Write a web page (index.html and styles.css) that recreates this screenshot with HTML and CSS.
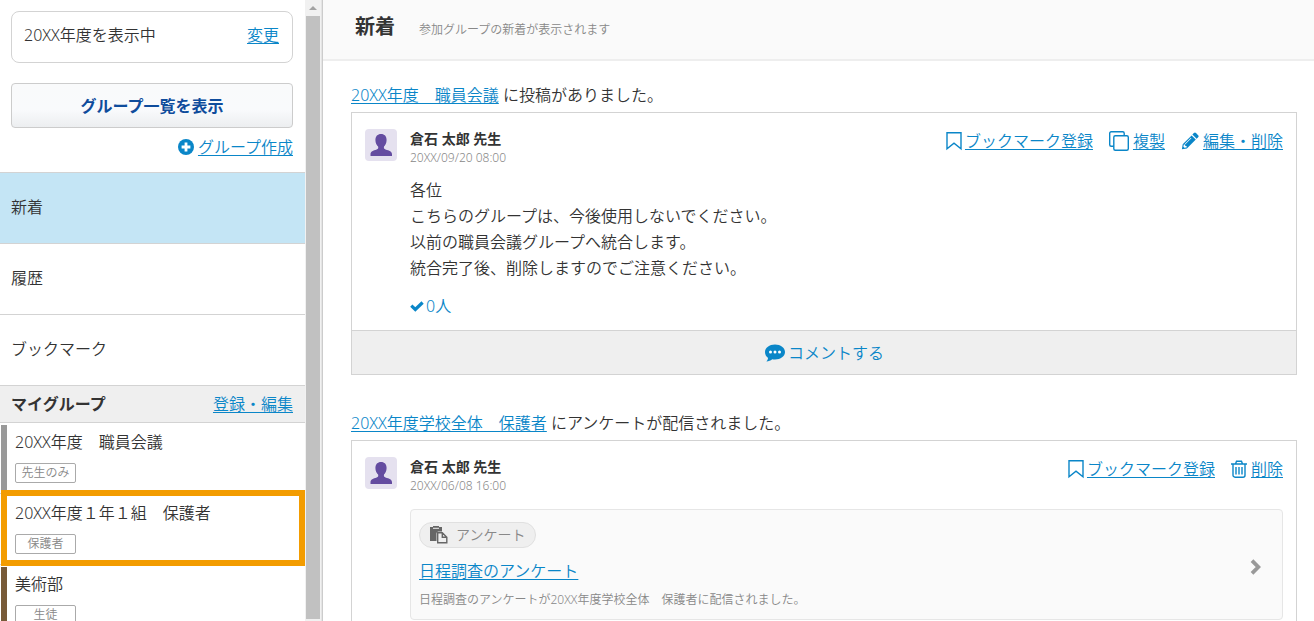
FILE: index.html
```html
<!DOCTYPE html>
<html lang="ja">
<head>
<meta charset="utf-8">
<meta name="viewport" content="width=device-width, initial-scale=1">
<title>新着</title>
<link rel="stylesheet" href="styles.css">
</head>
<body>
<svg class="sprite" aria-hidden="true">
  <symbol id="bookmark" viewBox="0 0 16 20"><path d="M1 1.700h14v16L8 12.200l-7 5.500z" fill="none" stroke="currentColor" stroke-width="1.400"/></symbol>
  <symbol id="person" viewBox="0 0 32 32"><path d="M16 5c3.6 0 5.6 2.300 5.600 6 0 3.200-1.400 5.300-2.600 6.600-.4 1.700.2 2.400 1.500 2.900 3.800 1.300 6.500 1.700 6.500 4.700V27H5.500v-1.800c0-3 2.700-3.400 6.200-4.700 1.300-.5 1.900-1.200 1.400-2.900-1.300-1.300-2.700-3.400-2.700-6.600 0-3.700 2.200-6 5.600-6z" fill="currentColor"/></symbol>
</svg>
<div class="app">
  <aside class="sidebar">
    <div class="sidebar-body">
      <div class="tools">
        <div class="year"><span>20XX年度を表示中</span><a href="#">変更</a></div>
        <button class="list-button" type="button">グループ一覧を表示</button>
        <div class="create">
          <svg width="16" height="16" viewBox="0 0 16 16" aria-hidden="true"><circle cx="8" cy="8" r="8" fill="currentColor"/><path d="M8 3.600v8.800M3.600 8h8.800" stroke="#fff" stroke-width="2.800"/></svg>
          <a href="#">グループ作成</a>
        </div>
      </div>
      <nav class="nav">
        <a class="nav-item current" href="#">新着</a>
        <a class="nav-item" href="#">履歴</a>
        <a class="nav-item" href="#">ブックマーク</a>
      </nav>
      <div class="group-head"><h2>マイグループ</h2><a href="#">登録・編集</a></div>
      <ul class="groups">
        <li class="group gray"><span>20XX年度　職員会議</span><span class="badge">先生のみ</span></li>
        <li class="group marked"><span>20XX年度１年１組　保護者</span><span class="badge">保護者</span></li>
        <li class="group brown"><span>美術部</span><span class="badge">生徒</span></li>
      </ul>
    </div>
    <div class="scrollbar" aria-hidden="true"><span class="arrow"></span><span class="thumb"></span></div>
  </aside>
  <main class="main">
    <header class="page-head"><h1>新着</h1><p>参加グループの新着が表示されます</p></header>
    <div class="feed">
      <section class="entry">
        <p class="lead"><a href="#">20XX年度　職員会議</a> に投稿がありました。</p>
        <article class="card">
          <div class="post">
            <svg class="avatar" width="32" height="32" aria-hidden="true"><use href="#person"/></svg>
            <div class="post-body">
              <div class="post-head">
                <div class="author"><strong>倉石 太郎 先生</strong><time>20XX/09/20 08:00</time></div>
                <div class="actions">
                  <span class="action"><svg width="16" height="20" aria-hidden="true"><use href="#bookmark"/></svg><a href="#">ブックマーク登録</a></span>
                  <span class="action wide"><svg width="20" height="20" viewBox="0 0 20 20" fill="none" stroke="currentColor" stroke-width="1.400" aria-hidden="true"><rect x="4.800" y="4.800" width="14.500" height="14.500" rx="1.500"/><path d="M4.800 15.200H2.200A1.500 1.500 0 0 1 .7 13.700V2.200A1.500 1.500 0 0 1 2.200.7h11.500a1.500 1.500 0 0 1 1.500 1.500v2.600"/></svg><a href="#">複製</a></span>
                  <span class="action wide"><svg width="18" height="18" viewBox="0 0 18 18" fill="currentColor" aria-hidden="true"><path d="M12.900 1.100a1.500 1.500 0 0 1 2.100 0l2.100 2.100a1.500 1.500 0 0 1 0 2.100l-1.500 1.500-4.200-4.200z"/><path fill-rule="evenodd" d="M10.600 3.400l4.200 4.200-8.900 8.900-5 .8.800-5zM9.900 5.800l-6 6 .5.500 6-6zM2.800 12.600l-.4 2.200 1 1 2.200-.4v-1.300H4.200v-1.500z"/></svg><a href="#">編集・削除</a></span>
                </div>
              </div>
              <p class="message">各位<br>こちらのグループは、今後使用しないでください。<br>以前の職員会議グループへ統合します。<br>統合完了後、削除しますのでご注意ください。</p>
              <button class="reads" type="button"><svg width="14" height="12" viewBox="0 0 14 12" aria-hidden="true"><path d="M1.300 5.700l4 3.800 7.300-7" fill="none" stroke="currentColor" stroke-width="3.200"/></svg><span>0人</span></button>
            </div>
          </div>
          <button class="comment" type="button"><svg width="22" height="18" viewBox="0 0 22 18" aria-hidden="true"><path d="M11 .5c5.600 0 10 3.400 10 7.500s-4.400 7.500-10 7.500c-1 0-1.900-.1-2.800-.3-1.600 1.300-3.500 2.100-5.800 2.300.9-1 1.500-2.100 1.700-3.500C2.200 12.600 1 10.500 1 8 1 3.900 5.400.5 11 .5z" fill="currentColor"/><g fill="#fff"><circle cx="6.500" cy="8" r="1.500"/><circle cx="11" cy="8" r="1.500"/><circle cx="15.500" cy="8" r="1.500"/></g></svg><span>コメントする</span></button>
        </article>
      </section>
      <section class="entry">
        <p class="lead"><a href="#">20XX年度学校全体　保護者</a> にアンケートが配信されました。</p>
        <article class="card">
          <div class="post">
            <svg class="avatar" width="32" height="32" aria-hidden="true"><use href="#person"/></svg>
            <div class="post-body">
              <div class="post-head">
                <div class="author"><strong>倉石 太郎 先生</strong><time>20XX/06/08 16:00</time></div>
                <div class="actions">
                  <span class="action"><svg width="16" height="20" aria-hidden="true"><use href="#bookmark"/></svg><a href="#">ブックマーク登録</a></span>
                  <span class="action wide"><svg width="16" height="18" viewBox="0 0 16 18" fill="none" stroke="currentColor" stroke-width="1.400" aria-hidden="true"><path d="M0 4h16M4.500 4l1-2.800h5l1 2.800M2 4v11.200a2 2 0 0 0 2 2h8a2 2 0 0 0 2-2V4M5 7v7.500M8 7v7.500M11 7v7.500"/></svg><a href="#">削除</a></span>
                </div>
              </div>
              <div class="survey">
                <div class="survey-text">
                  <span class="pill"><svg width="18" height="18" viewBox="0 0 18 18" aria-hidden="true"><path d="M0 1h3V0h6v1h3v4.500H8.500a2 2 0 0 0-2 2V15H0z" fill="currentColor"/><path d="M3 2.300h6" stroke="#efefef"/><path d="M7.700 6.800h4.600l4.500 4.500v5.500H7.700zM12.300 6.800v4.500h4.500" fill="none" stroke="currentColor" stroke-width="1.400"/></svg><span>アンケート</span></span>
                  <a href="#">日程調査のアンケート</a>
                  <small>日程調査のアンケートが20XX年度学校全体　保護者に配信されました。</small>
                </div>
                <svg width="12" height="16" viewBox="0 0 12 16" aria-hidden="true"><path d="M2 1.700l6.300 6.300L2 14.300" fill="none" stroke="#999" stroke-width="3.800"/></svg>
              </div>
            </div>
          </div>
        </article>
      </section>
    </div>
  </main>
</div>
</body>
</html>
```
FILE: styles.css
```css
* { box-sizing: border-box; }
body {
  margin: 0;
  background: #fff;
  color: #333;
  font: 350 16px/24px "Noto Sans", "Noto Sans CJK JP", sans-serif;
}
h1, h2, p, ul { margin: 0; padding: 0; }
a { color: #0a86c8; text-underline-offset: 2px; }
button { font: inherit; color: inherit; cursor: pointer; }
svg { flex: none; }
.sprite { display: none; }

.app { display: flex; height: 100vh; overflow: hidden; }

/* Sidebar */
.sidebar { display: flex; flex: none; width: 323px; border-right: 1px solid #ccc; }
.sidebar-body { flex: 1; overflow: hidden; }
.tools { display: flex; flex-direction: column; padding: 11px 12px 13px 11px; }
.year {
  display: flex;
  justify-content: space-between;
  align-items: center;
  height: 52px;
  padding: 0 13px 4px 12px;
  border: 1px solid #d3d3d3;
  border-radius: 8px;
}
.list-button {
  height: 45px;
  margin-top: 20px;
  padding: 0;
  border: 1px solid #ccc;
  border-radius: 4px;
  background: linear-gradient(#f9fafb, #f9fafc 60%, #eceef0);
  color: #0f4c9c;
  font-weight: 700;
}
.create { display: flex; align-items: center; justify-content: flex-end; gap: 4px; margin-top: 7px; color: #0a86c8; }
.nav-item {
  display: flex;
  align-items: center;
  height: 71px;
  padding: 0 11px 2px;
  border-top: 1px solid #d3d3d3;
  color: #333;
  text-decoration: none;
}
.nav-item.current { background: #c4e5f5; }
.group-head {
  display: flex;
  align-items: center;
  justify-content: space-between;
  height: 38px;
  padding: 0 12px 0 11px;
  border: solid #d3d3d3;
  border-width: 1px 0;
  background: #efefef;
}
.group-head h2 { font-size: 16px; font-weight: 700; }
.groups { list-style: none; }
.group {
  position: relative;
  display: flex;
  flex-direction: column;
  align-items: flex-start;
  gap: 9px;
  height: 71px;
  padding: 7px 15px 0;
  border-bottom: 1px solid #d3d3d3;
}
.group::before { content: ""; position: absolute; top: 2px; bottom: 0; left: 1px; width: 6px; }
.gray::before { background: #999; }
.brown::before { background: #775a38; }
.marked { z-index: 1; }
.marked::before { top: -4px; right: 0; bottom: -2px; width: auto; border: 6px solid #f39c00; }
.badge {
  min-width: 61px;
  padding: 0 5px;
  border: 1px solid #aaa;
  border-radius: 2px;
  color: #888;
  font-size: 12px;
  line-height: 18px;
  text-align: center;
}
.scrollbar { display: flex; flex-direction: column; align-items: center; width: 17px; padding-bottom: 2px; border-right: 1px solid #e4e4e4; background: #f1f1f1; }
.arrow { height: 16px; padding-top: 6px; }
.arrow::before { content: ""; display: block; border: 4px solid transparent; border-top: 0; border-bottom-color: #a3a3a3; }
.thumb { flex: 1; width: 14px; background: #c1c1c1; }

/* Main column */
.main { flex: 1; min-width: 0; }
.page-head {
  display: flex;
  align-items: center;
  gap: 24px;
  height: 61px;
  padding: 0 32px 6px;
  border-bottom: 2px solid #eee;
  background: #fafafa;
}
.page-head h1 { font-size: 20px; font-weight: 700; }
.page-head p { padding-top: 6px; color: #888; font-size: 12px; }
.feed { padding: 22px 17px 0 28px; }
.entry { margin-bottom: 36px; }
.lead { margin-bottom: 5px; }
.card { border: 1px solid #d3d3d3; }
.post { display: flex; align-items: flex-start; gap: 13px; padding: 16px 13px 12px; }
.avatar { border-radius: 4px; background: #e5e1ef; color: #644ca0; }
.post-body { flex: 1; min-width: 0; }
.post-head { display: flex; justify-content: space-between; }
.author { display: flex; flex-direction: column; }
.author strong { font-size: 14px; font-weight: 700; line-height: 20px; }
.author time { color: #888; font-size: 12px; font-weight: 300; line-height: 18px; }
.actions { display: flex; align-items: center; gap: 16px; height: 24px; }
.action { display: flex; align-items: center; gap: 3px; color: #0a86c8; }
.action.wide { gap: 4px; }
.message { margin-top: 10px; line-height: 26px; }
.reads { display: flex; align-items: center; gap: 2px; margin-top: 13px; padding: 0; border: 0; background: none; color: #0a86c8; }
.comment {
  display: flex;
  align-items: center;
  justify-content: center;
  gap: 2px;
  width: 100%;
  height: 44px;
  padding: 0;
  border: 0;
  border-top: 1px solid #d3d3d3;
  background: #efefef;
  color: #0a86c8;
}
.survey {
  display: flex;
  align-items: center;
  justify-content: space-between;
  margin-top: 14px;
  padding: 12px 20px 7px 8px;
  border: 1px solid #e6e6e6;
  border-radius: 4px;
  background: #fafafa;
}
.survey-text { display: flex; flex-direction: column; align-items: flex-start; }
.pill {
  display: flex;
  align-items: center;
  gap: 8px;
  height: 26px;
  margin-bottom: 11px;
  padding: 0 10px;
  border: 1px solid #e0e0e0;
  border-radius: 13px;
  background: #efefef;
  color: #888;
  font-size: 14px;
}
.pill svg { color: #666; }
.survey small { margin-top: 5px; color: #888; font-size: 12px; }
```
